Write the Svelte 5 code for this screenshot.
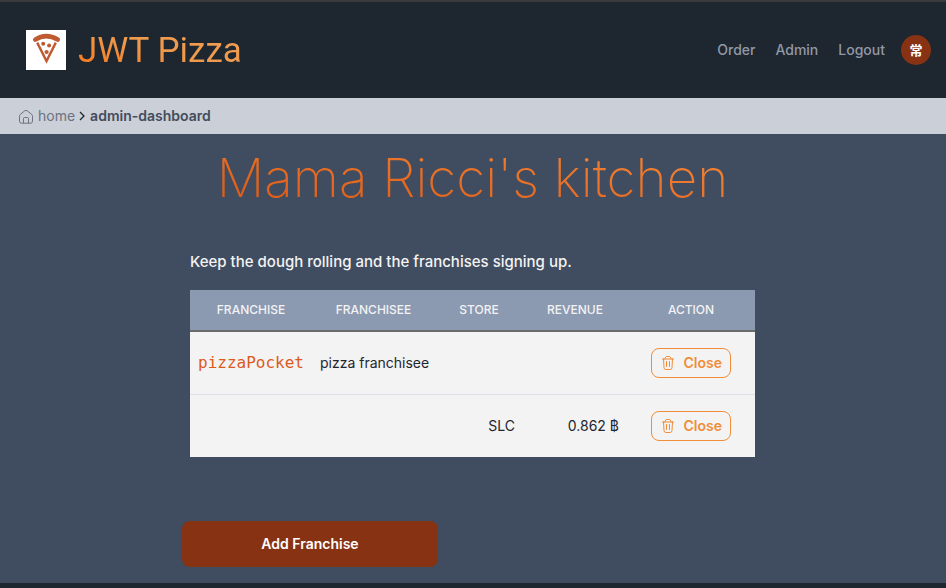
<script>
  const links = ['Order', 'Admin', 'Logout'];
  const rows = [
    { franchise: 'pizzaPocket', franchisee: 'pizza franchisee', store: '', revenue: '' },
    { franchise: '', franchisee: '', store: 'SLC', revenue: '0.862 ฿' },
  ];
</script>

<div class="page">
  <header>
    <div class="brand">
      <svg class="logo" viewBox="0 0 40 40" aria-hidden="true">
        <rect width="40" height="40" fill="#fff" />
        <path d="M9.3 9.6 Q20 2.8 31.7 9.6" fill="none" stroke="#c05a30" stroke-width="4.6" stroke-linecap="round" />
        <path d="M11.2 12.6 L20.5 31 L29.8 12.6" fill="none" stroke="#c05a30" stroke-width="2.4" stroke-linejoin="miter" />
        <circle cx="17.2" cy="13.8" r="2" fill="#c05a30" />
        <circle cx="23.1" cy="15.4" r="2" fill="#c05a30" />
        <circle cx="20.6" cy="22" r="2.1" fill="#c05a30" />
      </svg>
      <span class="name">JWT Pizza</span>
    </div>
    <nav aria-label="Main">
      {#each links as link}
        <a href="#{link.toLowerCase()}">{link}</a>
      {/each}
      <a class="avatar" href="#profile">常</a>
    </nav>
  </header>

  <nav class="crumbs" aria-label="Breadcrumb">
    <svg class="home" viewBox="0 0 16 16" fill="none" stroke="currentColor" aria-hidden="true">
      <path d="M1.5 8.2 Q1.5 7 2.4 6.3 L6.8 2.8 Q8 1.9 9.2 2.8 L13.6 6.3 Q14.5 7 14.5 8.2 V13.2 Q14.5 15.2 12.6 15.2 H3.4 Q1.5 15.2 1.5 13.2 Z" />
      <path d="M5.5 15.2 V10.5 Q5.5 9.5 6.5 9.5 H9.5 Q10.5 9.5 10.5 10.5 V15.2" />
    </svg>
    <a href="#home">home</a>
    <svg class="chevron" viewBox="0 0 8 12" fill="none" stroke="currentColor" aria-hidden="true">
      <path d="M2 2 L6 6 L2 10" stroke-width="1.3" />
    </svg>
    <a class="current" href="#admin-dashboard" aria-current="page">admin-dashboard</a>
  </nav>

  <main>
    <h1><span>Mama Ricci's kitchen</span></h1>
    <section>
      <p>Keep the dough rolling and the franchises signing up.</p>
      <table>
        <colgroup>
          <col class="c1" /><col class="c2" /><col class="c3" /><col class="c4" /><col class="c5" />
        </colgroup>
        <thead>
          <tr>
            <th scope="col">Franchise</th>
            <th scope="col">Franchisee</th>
            <th scope="col">Store</th>
            <th scope="col">Revenue</th>
            <th scope="col">Action</th>
          </tr>
        </thead>
        <tbody>
          {#each rows as row}
            <tr>
              <td class="franchise">{row.franchise}</td>
              <td>{row.franchisee}</td>
              <td class="end">{row.store}</td>
              <td class="end">{row.revenue}</td>
              <td class="action">
                <button class="close" type="button">
                  <svg viewBox="0 0 16 16" fill="none" stroke="currentColor" stroke-linecap="round" aria-hidden="true">
                    <path d="M2.5 4 H13.5 M5 4 C5.3 2.2 5.6 1.5 7 1.5 H9 C10.4 1.5 10.7 2.2 11 4 M3.5 4 L4 12.5 Q4.1 14.5 5.8 14.5 H10.2 Q11.9 14.5 12 12.5 L12.5 4 M6.5 6.5 V11.5 M9.5 6.5 V11.5" />
                  </svg>
                  Close
                </button>
              </td>
            </tr>
          {/each}
        </tbody>
      </table>
      <button class="add" type="button">Add Franchise</button>
    </section>
  </main>
  <footer></footer>
</div>

<style>
  :global(body) {
    margin: 0;
    background: #1e2630;
  }
  .page {
    display: flex;
    flex-direction: column;
    min-height: 100vh;
    box-sizing: border-box;
    border-top: 2px solid #3a3a3a;
    background: #1e2630;
    font-family: Inter, "Noto Sans CJK JP", sans-serif;
    font-size: 14px;
    line-height: 20px;
  }
  a {
    color: inherit;
    text-decoration: none;
  }
  header {
    display: flex;
    align-items: center;
    justify-content: space-between;
    height: 96px;
    padding: 0 15px 0 26px;
  }
  .brand {
    display: flex;
    align-items: center;
    gap: 12px;
  }
  .logo {
    width: 40px;
    height: 40px;
  }
  .name {
    padding-top: 2px;
    font-family: Roboto, sans-serif;
    font-size: 35px;
    line-height: 44px;
    background: linear-gradient(to top right, #f97316, #ee9a4c 50%, #f3a055);
    background-clip: text;
    color: transparent;
  }
  header nav {
    display: flex;
    align-items: center;
    gap: 20px;
    color: #9299a6;
    font-weight: 500;
  }
  .avatar {
    display: flex;
    align-items: center;
    justify-content: center;
    width: 30px;
    height: 30px;
    margin-left: -4px;
    border-radius: 50%;
    background: #883214;
    color: #fff;
    font-size: 13px;
    font-weight: 700;
  }
  .crumbs {
    display: flex;
    align-items: center;
    height: 36px;
    padding: 0 18px;
    background: #cbcfd7;
    color: #6b7280;
  }
  .home {
    width: 16px;
    height: 16px;
    margin-right: 4px;
  }
  .chevron {
    width: 8px;
    height: 12px;
    margin: 0 4px 0 3px;
    color: #1e2630;
  }
  .current {
    color: #434c5c;
    font-weight: 600;
  }
  main {
    padding: 8px 17px 16px 16px;
    background: #404c60;
  }
  h1 {
    margin: 0;
    text-align: center;
    font-size: 53px;
    line-height: 72px;
    font-weight: 200;
  }
  h1 span {
    background: linear-gradient(to top right, #dc5712, #f5893a);
    background-clip: text;
    color: transparent;
  }
  section {
    max-width: 565px;
    margin: 36px auto 0;
  }
  p {
    margin: 0 0 16px;
    color: #f3f3f3;
    font-size: 15px;
    line-height: 24px;
    font-weight: 500;
  }
  table {
    width: 100%;
    table-layout: fixed;
    border-collapse: separate;
    border-spacing: 0;
    background: #f3f3f3;
    color: #1e2630;
  }
  .c1 { width: 122px; }
  .c2 { width: 123px; }
  .c3 { width: 88px; }
  .c4 { width: 104px; }
  .c5 { width: 128px; }
  th {
    height: 40px;
    padding: 0;
    border-bottom: 2px solid #6b6b6b;
    background: #8b99b1;
    color: #f3f3f3;
    font-size: 12px;
    font-weight: 500;
    text-transform: uppercase;
  }
  td {
    height: 62px;
    padding: 0 8px;
    white-space: nowrap;
  }
  tbody tr:first-child td {
    border-bottom: 1px solid #dfe0ea;
  }
  .franchise {
    color: #dc5a1c;
    font-family: "DejaVu Sans Mono", monospace;
    font-size: 16px;
  }
  .end {
    text-align: right;
  }
  .action {
    text-align: center;
  }
  button {
    font-family: inherit;
    font-size: 14px;
    line-height: 20px;
    font-weight: 600;
    cursor: pointer;
  }
  .close {
    display: inline-flex;
    align-items: center;
    justify-content: space-between;
    width: 80px;
    height: 30px;
    padding: 0 8px;
    border: 1px solid #f18d3a;
    border-radius: 8px;
    background: transparent;
    color: #f18d3a;
    vertical-align: middle;
  }
  .close svg {
    width: 16px;
    height: 16px;
  }
  .add {
    display: block;
    width: 256px;
    height: 46px;
    margin: 64px 0 0 -8px;
    border: 0;
    border-radius: 8px;
    background: #883214;
    color: #fff;
  }
  footer {
    flex: 1;
    min-height: 5px;
  }
</style>
